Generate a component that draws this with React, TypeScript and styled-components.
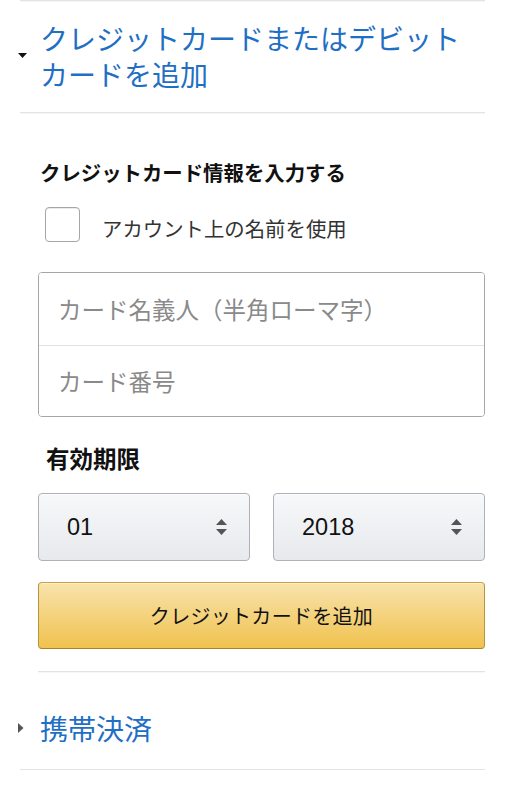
import styled, { createGlobalStyle } from "styled-components";

const GlobalStyle = createGlobalStyle`
  html, body {
    margin: 0;
    padding: 0;
    background: #fff;
  }
  body {
    font-family: "Noto Sans CJK JP", "Noto Sans", sans-serif;
    color: #111;
  }
`;

const Page = styled.div`
  width: 506px;
  padding: 0 21px 0 20px;
  box-sizing: border-box;
`;

const Divider = styled.hr<{ $indent?: number }>`
  border: 0;
  height: 1px;
  margin: 0 0 0 ${(p) => p.$indent ?? 0}px;
  background: #e3e3e3;
  box-shadow: 0 1px 1px rgba(0, 0, 0, 0.04);
`;

const SectionRow = styled.div<{ $top: number; $bottom: number }>`
  display: flex;
  align-items: center;
  margin-left: -2px;
  padding: ${(p) => p.$top}px 0 ${(p) => p.$bottom}px;
`;

const CaretBox = styled.div`
  width: 22px;
  flex: none;
  display: flex;
  align-items: center;
`;

const SectionTitle = styled.div`
  font-size: 28px;
  line-height: 36px;
  color: #1f6fc5;
`;

const Form = styled.div`
  padding: 47px 0 22px 18px;
`;

const FormTitle = styled.div`
  font-size: 20.4px;
  line-height: 24px;
  font-weight: 700;
  padding-left: 2px;
`;

const CheckRow = styled.label`
  display: flex;
  align-items: center;
  gap: 22px;
  margin: 23px 0 0 7px;
  height: 35px;
  font-size: 20.4px;
  color: #333;
`;

const CheckBox = styled.span`
  width: 33px;
  height: 33px;
  border: 1px solid #a6a6a6;
  border-radius: 4px;
  box-shadow: 0 1px 0 rgba(0, 0, 0, 0.08) inset;
  flex: none;
`;

const CheckLabel = styled.span`
  padding-top: 6px;
`;

const InputGroup = styled.div`
  margin-top: 30px;
  border: 1px solid #a6a6a6;
  border-radius: 4px;
  display: flex;
  flex-direction: column;
  overflow: hidden;
`;

const Field = styled.input`
  border: 0;
  outline: none;
  height: 72px;
  padding: 0 0 0 19px;
  font-family: "Noto Sans CJK JP", sans-serif;
  font-size: 23.5px;
  color: #111;
  background: #fff;
  & + & {
    border-top: 1px solid #e2e2e2;
    height: 70px;
  }
  &::placeholder {
    color: #8a8a8a;
  }
`;

const Label = styled.div`
  margin: 27px 0 0 8px;
  font-size: 23.5px;
  line-height: 28px;
  font-weight: 700;
`;

const SelectRow = styled.div`
  display: grid;
  grid-template-columns: 1fr 1fr;
  gap: 23px;
  margin-top: 21px;
`;

const Select = styled.div`
  height: 68px;
  box-sizing: border-box;
  border: 1px solid #adb1b8;
  border-radius: 4px;
  background: linear-gradient(to bottom, #f7f8fa, #e7e9ec);
  box-shadow: 0 1px 0 rgba(255, 255, 255, 0.6) inset;
  display: flex;
  align-items: center;
  justify-content: space-between;
  padding: 0 22px 0 28px;
  font-family: "Liberation Sans", Arial, sans-serif;
  font-size: 23.5px;
  color: #111;
`;

const Button = styled.button`
  display: block;
  width: 100%;
  height: 67px;
  margin-top: 21px;
  border: 1px solid;
  border-color: #c9a33f #b8953a #a8832c;
  border-radius: 4px;
  background: linear-gradient(to bottom, #f8e3ad, #f0c24e);
  box-shadow: 0 1px 0 rgba(255, 255, 255, 0.4) inset;
  font-family: "Noto Sans CJK JP", sans-serif;
  font-size: 20px;
  color: #111;
  letter-spacing: 0.3px;
  padding: 0;
`;

function Caret({ open }: { open: boolean }) {
  return open ? (
    <svg width="9" height="6" viewBox="0 0 9 6">
      <path d="M0 0h9L4.5 5z" fill="#111" />
    </svg>
  ) : (
    <svg width="6" height="10" viewBox="0 0 6 10">
      <path d="M0 0v10l5.5-5z" fill="#555" />
    </svg>
  );
}

function UpDown() {
  return (
    <svg width="11" height="16" viewBox="0 0 11 16">
      <path d="M5.5 0L11 6H0z" fill="#555" />
      <path d="M5.5 16L11 10H0z" fill="#555" />
    </svg>
  );
}

export default function App() {
  return (
    <Page>
      <GlobalStyle />
      <Divider />
      <SectionRow $top={19} $bottom={20}>
        <CaretBox>
          <Caret open />
        </CaretBox>
        <SectionTitle>
          クレジットカードまたはデビット
          <br />
          カードを追加
        </SectionTitle>
      </SectionRow>
      <Divider />
      <Form>
        <FormTitle>クレジットカード情報を入力する</FormTitle>
        <CheckRow>
          <CheckBox />
          <CheckLabel>アカウント上の名前を使用</CheckLabel>
        </CheckRow>
        <InputGroup>
          <Field placeholder="カード名義人（半角ローマ字）" />
          <Field placeholder="カード番号" />
        </InputGroup>
        <Label>有効期限</Label>
        <SelectRow>
          <Select>
            01
            <UpDown />
          </Select>
          <Select>
            2018
            <UpDown />
          </Select>
        </SelectRow>
        <Button>クレジットカードを追加</Button>
      </Form>
      <Divider $indent={18} />
      <SectionRow $top={38} $bottom={23}>
        <CaretBox>
          <Caret open={false} />
        </CaretBox>
        <SectionTitle>携帯決済</SectionTitle>
      </SectionRow>
      <Divider />
    </Page>
  );
}
